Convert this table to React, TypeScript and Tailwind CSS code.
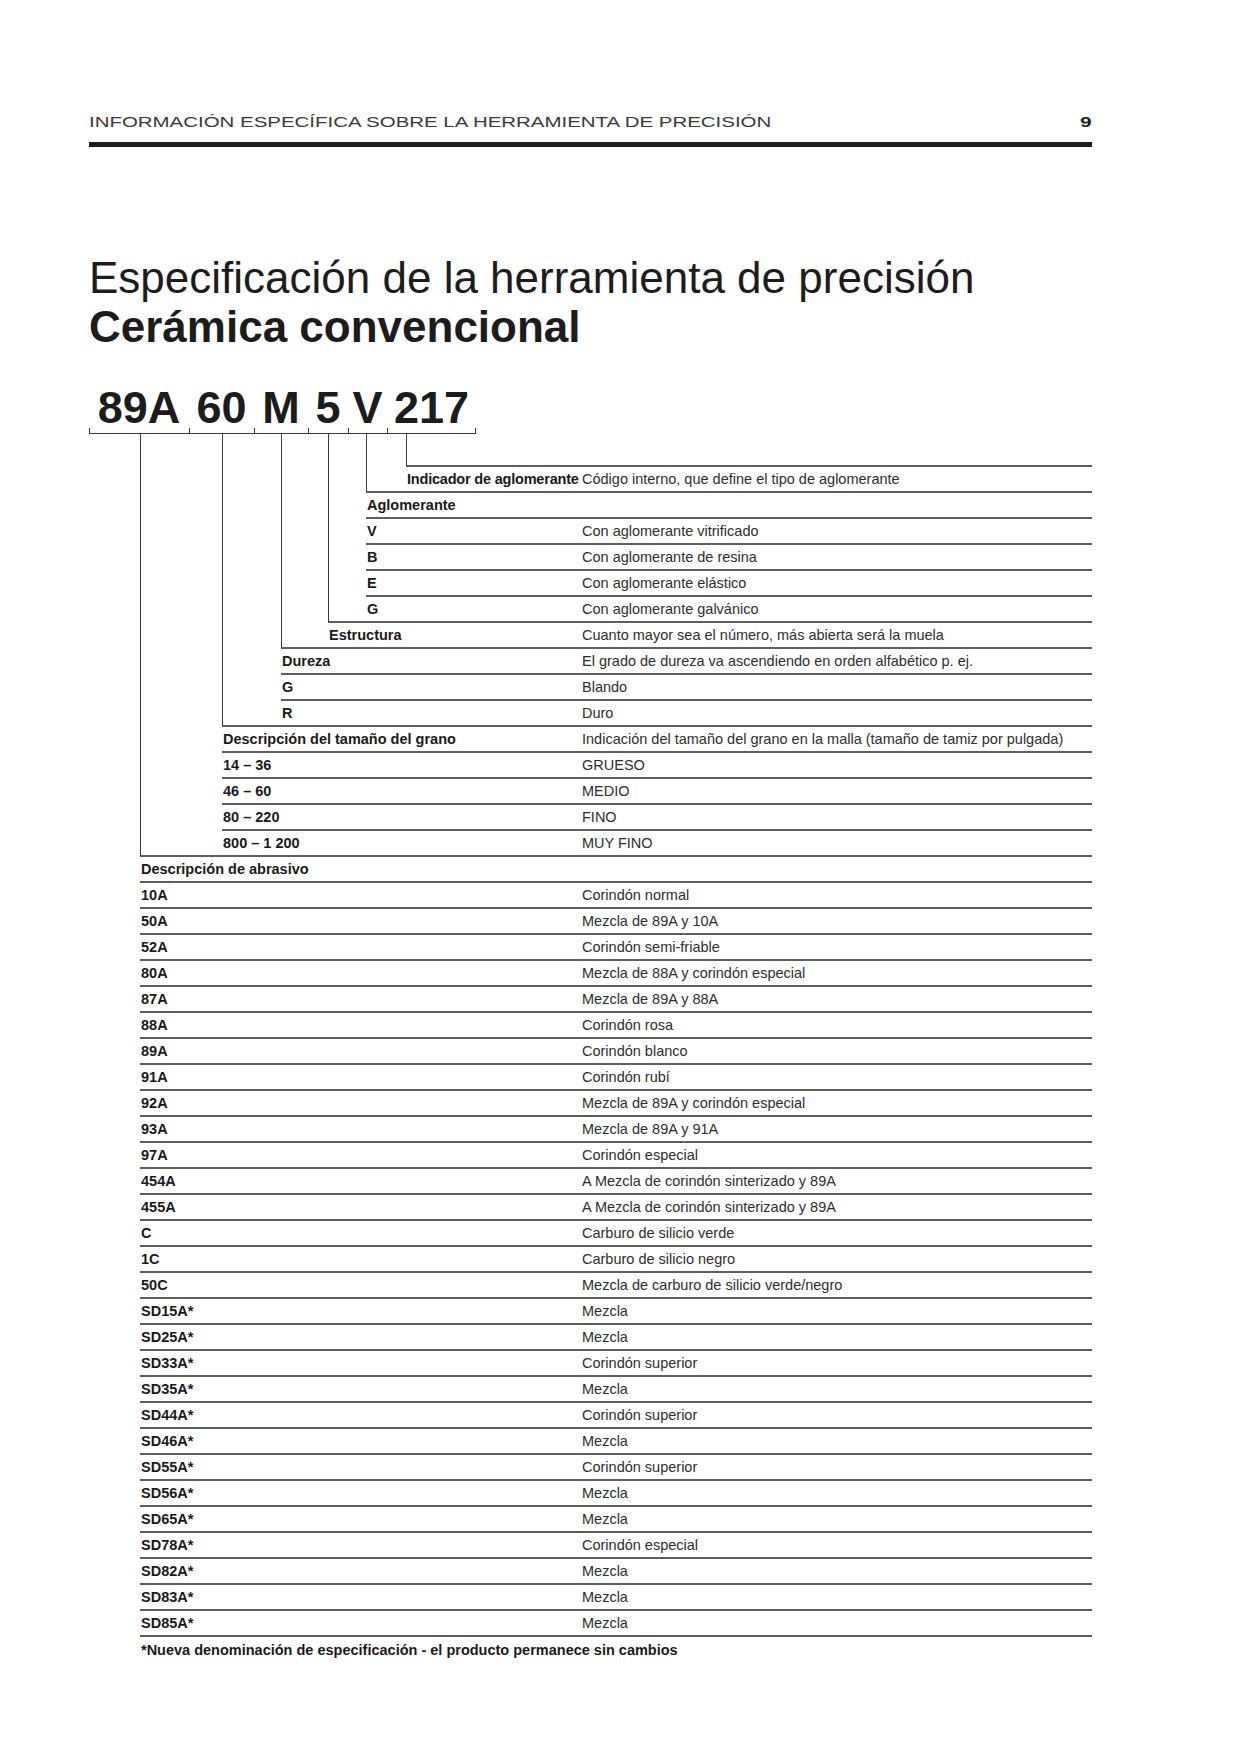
import React from 'react'

interface RowProps {
  label: string
  desc?: string
  last?: boolean
  indent: string
  labelClass?: string
}

// each row is 26px tall; the last row of a group leaves its bottom line to the enclosing box
function Row({ label, desc = '', last = false, indent, labelClass = '' }: RowProps) {
  return (
    <div
      className={`flex items-center ${indent} ${
        last ? 'h-[24px]' : 'h-[26px] border-b-2 border-b-[#5f5f5f]'
      }`}
    >
      <div className={`flex-1 whitespace-nowrap pl-[1px] font-bold text-[#1a1a1a] ${labelClass}`}>
        {label}
      </div>
      <div className="w-[510px] whitespace-nowrap text-[#2e2e2e]">{desc}</div>
    </div>
  )
}

const codeParts = [
  { text: '89A', w: 'w-[100px]' },
  { text: '60', w: 'w-[65px]' },
  { text: 'M', w: 'w-[54px]' },
  { text: '5', w: 'w-[40px]' },
  { text: 'V', w: 'w-[39px]' },
  { text: '217', w: 'w-[89px]' },
]

const abrasivos: [string, string][] = [
  ['10A', 'Corindón normal'],
  ['50A', 'Mezcla de 89A y 10A'],
  ['52A', 'Corindón semi-friable'],
  ['80A', 'Mezcla de 88A y corindón especial'],
  ['87A', 'Mezcla de 89A y 88A'],
  ['88A', 'Corindón rosa'],
  ['89A', 'Corindón blanco'],
  ['91A', 'Corindón rubí'],
  ['92A', 'Mezcla de 89A y corindón especial'],
  ['93A', 'Mezcla de 89A y 91A'],
  ['97A', 'Corindón especial'],
  ['454A', 'A Mezcla de corindón sinterizado y 89A'],
  ['455A', 'A Mezcla de corindón sinterizado y 89A'],
  ['C', 'Carburo de silicio verde'],
  ['1C', 'Carburo de silicio negro'],
  ['50C', 'Mezcla de carburo de silicio verde/negro'],
  ['SD15A*', 'Mezcla'],
  ['SD25A*', 'Mezcla'],
  ['SD33A*', 'Corindón superior'],
  ['SD35A*', 'Mezcla'],
  ['SD44A*', 'Corindón superior'],
  ['SD46A*', 'Mezcla'],
  ['SD55A*', 'Corindón superior'],
  ['SD56A*', 'Mezcla'],
  ['SD65A*', 'Mezcla'],
  ['SD78A*', 'Corindón especial'],
  ['SD82A*', 'Mezcla'],
  ['SD83A*', 'Mezcla'],
  ['SD85A*', 'Mezcla'],
]

const box = 'border-l border-l-[#3a3a3a] border-b-2 border-b-[#5f5f5f]'

export default function App() {
  return (
    <div className="min-h-[1754px] w-[1240px] bg-white font-['Liberation_Sans',Arial,sans-serif] text-[#1a1a1a]">
      <div className="ml-[89px] w-[1003px] pt-[112px]">
        {/* cabecera */}
        <div className="flex h-[20px] items-center justify-between text-[14px] leading-[20px] text-[#3a3a3a]">
          <span className="origin-left scale-x-[1.46] whitespace-nowrap">
            INFORMACIÓN ESPECÍFICA SOBRE LA HERRAMIENTA DE PRECISIÓN
          </span>
          <span className="origin-right scale-x-[1.5] font-bold text-[#1e1e1e]">9</span>
        </div>
        <div className="mt-[10px] h-[5px] bg-[#1e1e1e]" />

        {/* título */}
        <div className="mt-[106px] text-[44px] leading-[49px] text-[#1c1c1c]">
          <div>Especificación de la herramienta de precisión</div>
          <div className="font-bold">Cerámica convencional</div>
        </div>

        {/* código */}
        <div className="mt-[37px] flex">
          {codeParts.map((p, i) => (
            <div key={p.text} className={p.w}>
              <div className="h-[40px] text-center text-[45px] font-bold leading-[40px] text-[#1c1c1c]">
                {p.text}
              </div>
              <div
                className={`h-[6px] border-b border-l border-[#3a3a3a] ${
                  i === codeParts.length - 1 ? 'border-r' : ''
                }`}
              />
            </div>
          ))}
        </div>

        {/* árbol */}
        <div className="text-[14.5px] leading-[18px]">
          <div className={`ml-[51px] ${box}`}>
            <div className={`ml-[81px] ${box}`}>
              <div className={`ml-[58px] ${box}`}>
                <div className={`ml-[46px] ${box}`}>
                  <div className={`ml-[37px] ${box}`}>
                    <div className={`ml-[39px] h-[33px] ${box}`} />
                    <Row
                      indent="ml-[39px]"
                      label="Indicador de aglomerante"
                      labelClass="tracking-[-0.2px]"
                      desc="Código interno, que define el tipo de aglomerante"
                      last
                    />
                  </div>
                  <Row indent="ml-[37px]" label="Aglomerante" />
                  <Row indent="ml-[37px]" label="V" desc="Con aglomerante vitrificado" />
                  <Row indent="ml-[37px]" label="B" desc="Con aglomerante de resina" />
                  <Row indent="ml-[37px]" label="E" desc="Con aglomerante elástico" />
                  <Row indent="ml-[37px]" label="G" desc="Con aglomerante galvánico" last />
                </div>
                <Row
                  indent="ml-[46px]"
                  label="Estructura"
                  desc="Cuanto mayor sea el número, más abierta será la muela"
                  last
                />
              </div>
              <Row
                indent="ml-[58px]"
                label="Dureza"
                desc="El grado de dureza va ascendiendo en orden alfabético p. ej."
              />
              <Row indent="ml-[58px]" label="G" desc="Blando" />
              <Row indent="ml-[58px]" label="R" desc="Duro" last />
            </div>
            <Row
              indent="ml-[81px]"
              label="Descripción del tamaño del grano"
              desc="Indicación del tamaño del grano en la malla (tamaño de tamiz por pulgada)"
            />
            <Row indent="ml-[81px]" label="14 – 36" desc="GRUESO" />
            <Row indent="ml-[81px]" label="46 – 60" desc="MEDIO" />
            <Row indent="ml-[81px]" label="80 – 220" desc="FINO" />
            <Row indent="ml-[81px]" label="800 – 1 200" desc="MUY FINO" last />
          </div>
          <Row indent="ml-[51px]" label="Descripción de abrasivo" />
          {abrasivos.map(([code, desc]) => (
            <Row key={code} indent="ml-[51px]" label={code} desc={desc} />
          ))}
          <div className="ml-[51px] h-[26px] pl-[1px] font-bold leading-[26px] text-[#1a1a1a]">
            *Nueva denominación de especificación - el producto permanece sin cambios
          </div>
        </div>
      </div>
    </div>
  )
}
